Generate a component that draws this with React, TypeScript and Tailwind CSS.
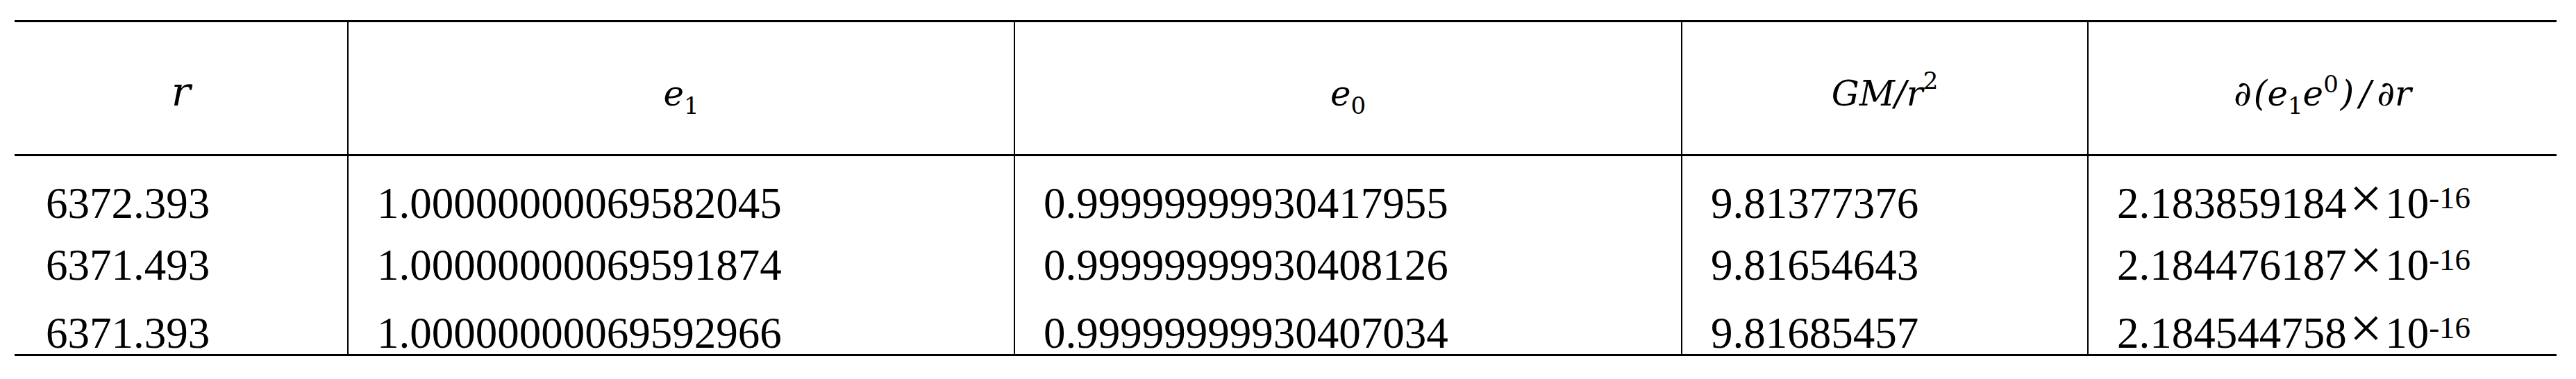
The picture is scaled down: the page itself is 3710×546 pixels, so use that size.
import React from "react";

type Row = {
  r: string;
  e1: string;
  e0: string;
  g: string;
  d: string;
};

const rows: Row[] = [
  { r: "6372.393", e1: "1.00000000069582045", e0: "0.99999999930417955", g: "9.81377376", d: "2.183859184" },
  { r: "6371.493", e1: "1.00000000069591874", e0: "0.99999999930408126", g: "9.81654643", d: "2.184476187" },
  { r: "6371.393", e1: "1.00000000069592966", e0: "0.99999999930407034", g: "9.81685457", d: "2.184544758" },
];

// vertical gap above each data line (first one is the cell's top padding)
const lineGaps = ["mt-[37px]", "mt-[26px]", "mt-[35px]"];

function Sub({ children }: { children: React.ReactNode }) {
  return <sub className="text-[34px] not-italic -bottom-[12px]">{children}</sub>;
}

function Sup({ children, className }: { children: React.ReactNode; className: string }) {
  return <sup className={`text-[34px] not-italic ${className}`}>{children}</sup>;
}

function BodyCell({
  values,
  first,
  sci,
}: {
  values: string[];
  first?: boolean;
  sci?: boolean;
}) {
  return (
    <div
      className={
        first
          ? "h-[285px] pl-[45px] font-['Liberation_Serif',serif]"
          : "h-[285px] border-l-2 border-black pl-[41px] font-['Liberation_Serif',serif]"
      }
    >
      {values.map((v, i) => (
        <div key={i} className={`${lineGaps[i]} whitespace-nowrap text-[63px] leading-none`}>
          {v}
          {sci && (
            <>
              <span className="mx-[4px] text-[84px] leading-[0]">×</span>
              10
              <sup className="text-[45px] -top-[14px]">-16</sup>
            </>
          )}
        </div>
      ))}
    </div>
  );
}

export default function App() {
  return (
    <div className="h-[546px] w-[3710px] bg-white pt-[29px] pl-[21px] text-black">
      <div className="w-[3661px] border-y-[3px] border-black">
        <div className="grid h-[193px] grid-cols-[479px_960px_961px_585px_676px] border-b-[3px] border-black font-['DejaVu_Serif',serif] italic">
          <div className="pt-[71px] text-center text-[58px] leading-none">r</div>
          <div className="border-l-2 border-black pt-[78px] text-center text-[50px] leading-none">
            e<Sub>1</Sub>
          </div>
          <div className="border-l-2 border-black pt-[78px] text-center text-[50px] leading-none">
            e<Sub>0</Sub>
          </div>
          <div className="border-l-2 border-black pt-[78px] text-center text-[50px] leading-none">
            GM/r<Sup className="-top-[24px]">2</Sup>
          </div>
          <div className="border-l-2 border-black pt-[78px] text-center text-[50px] leading-none">
            ∂<span className="ml-[3px]">(</span>e<Sub>1</Sub>e<Sup className="-top-[19px]">0</Sup>
            <span className="ml-[3px]">)</span>
            <span className="mx-[8px]">/</span>∂r
          </div>
        </div>

        <div className="grid grid-cols-[479px_960px_961px_585px_676px]">
          <BodyCell first values={rows.map((x) => x.r)} />
          <BodyCell values={rows.map((x) => x.e1)} />
          <BodyCell values={rows.map((x) => x.e0)} />
          <BodyCell values={rows.map((x) => x.g)} />
          <BodyCell sci values={rows.map((x) => x.d)} />
        </div>
      </div>
    </div>
  );
}
